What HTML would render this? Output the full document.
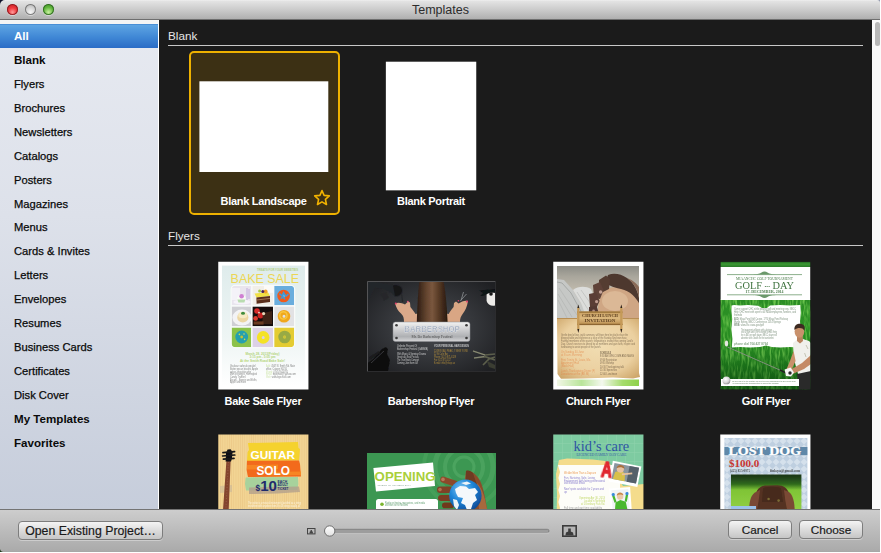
<!DOCTYPE html>
<html><head><meta charset="utf-8"><title>Templates</title>
<style>
*{box-sizing:border-box;margin:0;padding:0}
html,body{width:881px;height:553px;overflow:hidden;background:#fff;font-family:"Liberation Sans",sans-serif;}
#win{position:absolute;left:0;top:0;width:881px;height:553px;overflow:hidden;background:#fff}
#tb{position:absolute;left:0;top:0;width:880px;height:20px;background:linear-gradient(#efefef 0,#e2e2e2 1.5px,#cdcdcd 9px,#afafaf 19px);border-bottom:1px solid #6e6e6e;border-radius:5px 3px 0 0}
#tb .t{position:absolute;left:0;width:881px;top:2px;text-align:center;font-size:12.5px;color:#2c2c2c;line-height:16px}
.cornl{position:absolute;left:0;top:0;width:6px;height:6px;background:#0d1028}
.cornr{position:absolute;right:1px;top:0;width:3px;height:3px;background:#8d95aa}
.tl{position:absolute;top:4px;width:11px;height:11px;border-radius:50%}
#side{position:absolute;left:0;top:20px;width:158px;height:489px;background:linear-gradient(#e7eaf1 0%,#dde1ea 40%,#c6cddb 100%)}
#side .strip{position:absolute;left:0;top:0;width:158px;height:4px;background:#f4f4f4}
.row{position:absolute;left:0;width:158px;height:24px;line-height:23px;padding-left:14px;font-size:11.2px;color:#0a0a0a;-webkit-text-stroke:.25px #0a0a0a}
.row.b{font-weight:bold;font-size:11.6px;-webkit-text-stroke:0;line-height:22px}
.row.sel{background:linear-gradient(#5fa5e3 0%,#4189d6 50%,#2a6cc6 100%);color:#fff;border-top:1px solid #4a8fd6;line-height:21px}
#main{position:absolute;left:159px;top:20px;width:713px;height:489px;background:#1b1b1b;overflow:hidden}
.sh{position:absolute;left:9px;font-size:11.7px;color:#e6e6e6;line-height:14px}
.hl{position:absolute;left:9px;width:695px;height:1px;background:#c8c8c8}
.lab{position:absolute;letter-spacing:-.3px;font-size:11px;font-weight:bold;color:#fff;text-align:center;line-height:14px;white-space:nowrap}
#sb{position:absolute;left:872px;top:20px;width:9px;height:489px;background:#fafafa}
#sb i{position:absolute;left:3px;top:2px;width:5px;height:24px;border-radius:3px;background:#b9b9b9}
#bot{position:absolute;left:0;top:509px;width:880px;height:43px;background:linear-gradient(#cdcdcd 0,#bbbbbb 21px,#aaaaaa 41.2px,#a6a6a6 41.6px,#fff 42px);border-top:1px solid #747474}
.btn{position:absolute;top:10px;height:19px;border:1px solid #7d7d7d;border-radius:4px;background:linear-gradient(#f4f4f4 0%,#dcdcdc 50%,#c6c6c6 100%);font-size:11.8px;color:#1a1a1a;text-align:center;line-height:18px;-webkit-text-stroke:.2px #1a1a1a;box-shadow:0 1px 0 rgba(255,255,255,.35)}
</style></head><body>
<div id="win">
<div class="cornl"></div><div class="cornr"></div>
<div id="tb"><div class="t">Templates</div>
<div class="tl" style="left:7px;background:radial-gradient(circle at 50% 75%,#ff9a9a 0%,#f0383c 45%,#b81a20 100%);box-shadow:inset 0 0 0 1px rgba(120,20,25,.75),0 1px 0 rgba(255,255,255,.4)"></div>
<div class="tl" style="left:25px;background:radial-gradient(circle at 50% 75%,#f6f6f6 0%,#cfcfcf 55%,#a2a2a2 100%);box-shadow:inset 0 0 0 1px rgba(100,100,100,.8),0 1px 0 rgba(255,255,255,.4)"></div>
<div class="tl" style="left:42.5px;background:radial-gradient(circle at 50% 75%,#c9f0a0 0%,#63b83e 50%,#3c8a22 100%);box-shadow:inset 0 0 0 1px rgba(40,95,30,.8),0 1px 0 rgba(255,255,255,.4)"></div>
</div>
<div id="side"><div class="strip"></div>
<div class="row b sel" style="top:4px">All</div>
<div class="row b" style="top:29px">Blank</div>
<div class="row" style="top:53px">Flyers</div>
<div class="row" style="top:77px">Brochures</div>
<div class="row" style="top:101px">Newsletters</div>
<div class="row" style="top:125px">Catalogs</div>
<div class="row" style="top:149px">Posters</div>
<div class="row" style="top:173px">Magazines</div>
<div class="row" style="top:196px">Menus</div>
<div class="row" style="top:220px">Cards &amp; Invites</div>
<div class="row" style="top:244px">Letters</div>
<div class="row" style="top:268px">Envelopes</div>
<div class="row" style="top:292px">Resumes</div>
<div class="row" style="top:316px">Business Cards</div>
<div class="row" style="top:340px">Certificates</div>
<div class="row" style="top:364px">Disk Cover</div>
<div class="row b" style="top:388px">My Templates</div>
<div class="row b" style="top:412px">Favorites</div>
</div>
<div id="main">
<div class="sh" style="top:9px">Blank</div><div class="hl" style="top:25px"></div>
<div style="position:absolute;left:30px;top:31px;width:151px;height:164px;border:2px solid #eeb100;border-radius:5px;background:#3c3014"></div>
<svg style="position:absolute;left:40px;top:61px" width="130" height="92"><rect x=".4" y=".3" width="128.9" height="90.7" fill="#fff"/></svg>
<div class="lab" style="left:52px;top:174px;width:105px">Blank Landscape</div>
<svg style="position:absolute;left:154px;top:169px" width="18" height="17" viewBox="0 0 18 17"><path d="M9 1.6 L11.1 6.4 L16.3 6.9 L12.4 10.4 L13.5 15.5 L9 12.9 L4.5 15.5 L5.6 10.4 L1.7 6.9 L6.9 6.4 Z" fill="none" stroke="#f2b300" stroke-width="1.6" stroke-linejoin="round"/></svg>
<svg style="position:absolute;left:226px;top:41px" width="93" height="131"><rect x=".85" y=".7" width="90.4" height="128.65" fill="#fff"/></svg>
<div class="lab" style="left:222px;top:174px;width:100px">Blank Portrait</div>
<div class="sh" style="top:209px">Flyers</div><div class="hl" style="top:225px"></div>
<svg style="position:absolute;left:59px;top:241px" width="91" height="129" viewBox="0 0 91 129">
<defs>
<linearGradient id="bkbg" x1="0" y1="0" x2="0" y2="1"><stop offset="0" stop-color="#dfecec"/><stop offset=".6" stop-color="#eef5f4"/><stop offset="1" stop-color="#ffffff"/></linearGradient>
<filter id="bl5" x="-10%" y="-10%" width="120%" height="120%"><feGaussianBlur stdDeviation=".55"/></filter>
<filter id="bl3" x="-10%" y="-10%" width="120%" height="120%"><feGaussianBlur stdDeviation=".35"/></filter>
<clipPath id="bkclip"><rect x="13.6" y="24.8" width="62.6" height="61.4" rx="4"/></clipPath>
</defs>
<rect width="91" height="129" fill="#fff"/>
<rect x="4" y="4.6" width="83" height="120.4" fill="url(#bkbg)"/>
<text x="59.5" y="9.6" font-family="Liberation Sans,sans-serif" font-size="3.3" font-weight="bold" fill="#b4cf80" text-anchor="middle" textLength="41" lengthAdjust="spacingAndGlyphs">TREATS FOR YOUR SWEETIES</text>
<text x="12.6" y="22.2" font-family="Liberation Sans,sans-serif" font-size="13.6" fill="#ecd654" textLength="68.4" lengthAdjust="spacingAndGlyphs">BAKE SALE</text>
<rect x="12.6" y="23.8" width="64.6" height="63.4" rx="4.6" fill="#fafcfb" filter="url(#bl3)"/>
<g clip-path="url(#bkclip)"><g filter="url(#bl5)">
<rect x="12" y="23" width="66" height="65" fill="#f6f8f7"/>
<!-- row1 -->
<rect x="13.6" y="24.8" width="19.6" height="19.4" fill="#e9e5ee"/>
<rect x="14" y="27" width="8" height="12" fill="#f4f2f8"/><path d="M29 27V40M31 28V38" stroke="#b9a0d8" stroke-width=".8"/>
<ellipse cx="24" cy="41" rx="8.6" ry="2.6" fill="#f6f3fa"/><ellipse cx="23.4" cy="37.6" rx="4.4" ry="3.6" fill="#f8fbf6"/><path d="M19.4 38.6 H27.4 L26.4 41.6 H20.4 Z" fill="#b9dcb0"/><circle cx="23.6" cy="35.2" r="2.3" fill="#cf7fd2"/>
<rect x="34.4" y="24.8" width="20.6" height="19.4" fill="#f1eee8"/>
<rect x="46" y="24.8" width="9" height="7" fill="#fbfaf8"/>
<path d="M36.6 32.4 L50 31.2 L52 35 L38.4 36.6 Z" fill="#f1e044"/><path d="M38.4 36.6 L52 35 L52 41 L38.6 42.8 Z" fill="#5a2e1c"/><path d="M38.5 39 L52 37.4" stroke="#a87a56" stroke-width=".9"/>
<circle cx="47.6" cy="30.6" r="2" fill="#f0a22c"/><circle cx="44.8" cy="30.6" r="1.5" fill="#4a2452"/><circle cx="41.6" cy="30" r="1.5" fill="#a6c844"/>
<rect x="56.2" y="24.8" width="20" height="19.4" fill="#69addd"/>
<circle cx="65.6" cy="35" r="4" fill="none" stroke="#ef5a1c" stroke-width="4.6"/><path d="M61.4 32.6 l2.6 2.4 l1.6-3.4 l2.4 3.6 l2.4-2.2 M62.6 37.4 l2.4-1.2 l2 2" stroke="#3a9ad9" stroke-width="1.5" fill="none"/>
<!-- row2 -->
<rect x="13.6" y="45.4" width="19.6" height="19.9" fill="#cfcfd4"/>
<ellipse cx="24" cy="56.6" rx="9.6" ry="8" fill="#f3f3f5"/><ellipse cx="24.8" cy="56.4" rx="5.6" ry="5" fill="#ecd6a2"/><ellipse cx="24.8" cy="54" rx="4.6" ry="3.2" fill="#f6eac4"/><ellipse cx="25" cy="52.2" rx="2" ry="1.5" fill="#3f8c3c"/>
<rect x="34.4" y="45.4" width="20.6" height="19.9" fill="#150a08"/>
<circle cx="39" cy="50" r="2.8" fill="#d62a2a"/><circle cx="42.6" cy="54.6" r="3" fill="#c82222"/><circle cx="37.6" cy="57.4" r="2.4" fill="#dc3a30"/><path d="M45 52 L54 50 L54 63 L44 63 Z" fill="#3c2016"/><circle cx="45.6" cy="52.6" r="1.6" fill="#e6d6b8"/><circle cx="41" cy="51.6" r=".9" fill="#f0e0d0"/><rect x="35.6" y="60.4" width="10" height="3.2" fill="#6a3a24"/>
<rect x="56.2" y="45.4" width="20" height="19.9" fill="#e2e2e4"/>
<circle cx="66" cy="55.2" r="3.9" fill="none" stroke="#f0a71e" stroke-width="4.8"/><circle cx="65.4" cy="54.4" r="3.6" fill="none" stroke="#f8c63c" stroke-width="1.6"/>
<!-- row3 -->
<rect x="13.6" y="66.5" width="19.6" height="19.7" fill="#8cc24a"/>
<circle cx="23.7" cy="76" r="3.9" fill="none" stroke="#27a0ae" stroke-width="5"/><circle cx="21.4" cy="73.4" r=".8" fill="#c8e04a"/><circle cx="26.6" cy="78.4" r=".8" fill="#c8e04a"/><circle cx="26" cy="73" r=".7" fill="#e8e060"/><circle cx="23.7" cy="76" r="1.2" fill="#c8c038"/>
<rect x="34.4" y="66.5" width="20.6" height="19.7" fill="#dcd1e6"/>
<circle cx="45.2" cy="76.4" r="3.9" fill="none" stroke="#f4e226" stroke-width="4.8"/>
<rect x="56.2" y="66.5" width="20" height="19.7" fill="#e4cc31"/>
<circle cx="66.6" cy="76" r="3.9" fill="none" stroke="#98aa44" stroke-width="4.8"/><circle cx="66.6" cy="76" r="1.4" fill="#c8c23a"/>
</g>
<path d="M33.8 24V87M55.6 24V87M13 44.8H77M13 65.9H77" stroke="#f8faf9" stroke-width="1.2" fill="none"/>
</g>
<g font-family="Liberation Sans,sans-serif" font-weight="bold" fill="#b3d578" text-anchor="middle">
<text x="44.5" y="93.6" font-size="3.5" textLength="34" lengthAdjust="spacingAndGlyphs">March 28, 2013(Friday)</text>
<text x="44.5" y="97.2" font-size="3.3" textLength="26" lengthAdjust="spacingAndGlyphs">3:15 pm - 5:00 pm</text>
<text x="44.5" y="101.2" font-size="3.7" textLength="45" lengthAdjust="spacingAndGlyphs">At the Smith Road Bake Sale!</text>
</g>
<g font-family="Liberation Sans,sans-serif" font-size="3.2" fill="#333" opacity=".62" filter="url(#bl3)">
<text x="12" y="106.3" textLength="26" lengthAdjust="spacingAndGlyphs">Voulour sahnuk peuks!</text>
<text x="12" y="109" textLength="28" lengthAdjust="spacingAndGlyphs">Butter pecan biscotti, Apple</text>
<text x="12" y="111.7" textLength="21" lengthAdjust="spacingAndGlyphs">cakes, chocolate chip</text>
<text x="12" y="114.4" textLength="27" lengthAdjust="spacingAndGlyphs">Mom's brownies, Hummigbird</text>
<text x="12" y="117.1" textLength="16" lengthAdjust="spacingAndGlyphs">Candy Truffles!</text>
<text x="12" y="119.8" textLength="27" lengthAdjust="spacingAndGlyphs">Biscotti... Brownie and Muffin,</text>
<text x="12" y="122.3" textLength="16" lengthAdjust="spacingAndGlyphs">Apple and more</text>
<text x="48" y="106.3" textLength="29" lengthAdjust="spacingAndGlyphs"><tspan fill="#b5d67c">Add:</tspan> 4567 N. Smith Rd. Main</text>
<text x="48" y="109" textLength="21" lengthAdjust="spacingAndGlyphs">office, Catown 90210</text>
<text x="48" y="111.7" textLength="22" lengthAdjust="spacingAndGlyphs"><tspan fill="#b5d67c">Phone:</tspan> (704) 764 8715</text>
<text x="48" y="114.4" textLength="30" lengthAdjust="spacingAndGlyphs"><tspan fill="#b5d67c">Email:</tspan> bgschool@yahoo.com</text>
<text x="48" y="117.1" textLength="25" lengthAdjust="spacingAndGlyphs"><tspan fill="#b5d67c">Web:</tspan> www.bgschool.com</text>
</g>
<path class="trim" d="M-1 -1H92V130H-1Z M.25 0.65H90.45V128.55H.25Z" fill-rule="evenodd" fill="#1b1b1b"/>
</svg>
<svg style="position:absolute;left:208px;top:261px" width="129" height="91" viewBox="0 0 129 91">
<defs>
<radialGradient id="bbbg" cx=".5" cy=".5" r=".65"><stop offset="0" stop-color="#4a4c51"/><stop offset=".5" stop-color="#35373b"/><stop offset="1" stop-color="#1f2023"/></radialGradient>
<linearGradient id="bbhair" x1="0" y1="0" x2="1" y2="0"><stop offset="0" stop-color="#2c1c12"/><stop offset=".3" stop-color="#62432e"/><stop offset=".5" stop-color="#7a573e"/><stop offset=".7" stop-color="#5a3c28"/><stop offset="1" stop-color="#26180e"/></linearGradient>
<linearGradient id="bbpl" x1="0" y1="0" x2="0" y2="1"><stop offset="0" stop-color="#f2f2f2"/><stop offset=".45" stop-color="#c9cacc"/><stop offset=".75" stop-color="#aeb0b3"/><stop offset="1" stop-color="#d6d6d8"/></linearGradient>
<filter id="bb6" x="-10%" y="-10%" width="120%" height="120%"><feGaussianBlur stdDeviation=".6"/></filter>
<filter id="bb3" x="-10%" y="-10%" width="120%" height="120%"><feGaussianBlur stdDeviation=".3"/></filter>
</defs>
<rect width="129" height="91" fill="url(#bbbg)"/>
<g filter="url(#bb6)">
<!-- shoulders -->
<path d="M37 41 C38 36 44 33.5 51 32.5 L79 32.5 C86 33.5 91 36 92.5 41 Z" fill="#d8aa8a"/>
<!-- hands -->
<path d="M28 22.6 C31 21 35 22 38 23.6 L41 20.6 L43 21.4 L43.4 26 C46 29 48.6 33 50.4 36 L51 41 L37 41 C37 37 36.4 35 34 32.6 C31 30 29.4 27 28 22.6 Z" fill="#dba98a"/>
<path d="M101 20 C98 19 94.6 20.4 91.6 22.6 L89 20.6 L87 22 L86.6 26 C84 29 82 32 80.6 35 L80 41 L93 41 C93 38 93.6 35.6 95.6 33 C98 30 100 26 101 20 Z" fill="#d9a684"/>
<circle cx="28.8" cy="22.6" r="1" fill="#e2416c"/><circle cx="100" cy="20.4" r="1" fill="#e2416c"/><circle cx="40.8" cy="20.6" r=".9" fill="#d8507a"/><circle cx="91.4" cy="19.8" r=".8" fill="#e2416c"/>
<!-- hair -->
<path d="M52.5 0 L76.5 0 C78.5 10 80 26 80.6 41 L49.8 41 C50.4 26 51 10 52.5 0 Z" fill="url(#bbhair)"/>
<!-- scissors / comb -->
<path d="M96.5 11 L94 19.5 M99.5 13 L93.4 19.8" stroke="#8e9296" stroke-width=".8" fill="none"/>
<path d="M34.6 13 L35.6 21" stroke="#26282c" stroke-width="1.3"/>
<!-- hair dryer top-left -->
<path d="M1 1 L8 1 L18 2.6 L26 4 C31 2.6 36 4.6 36 9 C36 13.6 32 16.6 27.6 15.6 L24.4 12 L17 8.6 L8 6.6 L5 12 L3 18 L1 18 Z" fill="#24262a"/>
<path d="M26 4.6 C31 3.6 35 6 35 9.6 C35 13 31 15.6 28 14.8 Z" fill="#141518"/>
<path d="M13 12.6 L19 11 L22 17 L17 20 Z" fill="#26282a"/>
<!-- top-right -->
<path d="M112 9.6 L128 8 L128 11.6 L121 12.6 L116 15 L113 15 L116 12 Z" fill="#111214"/>
<path d="M119.6 13.6 C121 12 124 11.6 128 12 L128 24.6 C124 25.4 120.6 23.6 119.6 20 Z" fill="#ecebe8"/>
<circle cx="124" cy="13" r="1.8" fill="#161618"/>
<!-- bottom-left straightener -->
<path d="M1 82 L6 78 L15 68 L19 66 L21 68 L20 73 L23 79 L21 90 L1 90 Z" fill="#0e0e10"/>
<path d="M4 82 L17 70" stroke="#3a3b3f" stroke-width=".9"/>
<path d="M2 76 L12 70 L13 72 L3 79 Z" fill="#1a1b1e"/>
<!-- bottom-right clippers -->
<path d="M106 70 L118 74 L128 73 M107 77 L118 75.6 L128 79 M116 84 L122 78 L128 76" stroke="#5c5e4c" stroke-width="1.7" fill="none"/>
<path d="M106 70 L118 74 M107 77 L117 75.6" stroke="#9c9e88" stroke-width=".7" fill="none"/>
<path d="M120 80 L128 84 L128 88 L122 86 Z" fill="#3a3c30"/>
</g>
<!-- plate -->
<g filter="url(#bb3)">
<rect x="26" y="41" width="77" height="19.5" rx="2.5" fill="url(#bbpl)" stroke="#8a8c90" stroke-width=".5"/>
<circle cx="29.5" cy="44.2" r="1.3" fill="#3a3a3a"/><circle cx="99.5" cy="44.2" r="1.3" fill="#3a3a3a"/><circle cx="29.5" cy="57" r="1.3" fill="#3a3a3a"/><circle cx="99.5" cy="57" r="1.3" fill="#3a3a3a"/>
<text x="65" y="50.9" font-family="Liberation Sans,sans-serif" font-weight="bold" font-size="8.2" fill="#9ca7ba" stroke="#eef1f5" stroke-width=".25" text-anchor="middle" textLength="55.5" lengthAdjust="spacingAndGlyphs">BARBERSHOP</text>
<text x="65" y="56.6" font-family="Liberation Serif,serif" font-size="3.4" fill="#4a4a4a" text-anchor="middle" textLength="41" lengthAdjust="spacingAndGlyphs">Mr. Do Barbershop Festival</text>
</g>
<g font-family="Liberation Sans,sans-serif" font-size="3.3" fill="#f0f0f0" opacity=".75" filter="url(#bb3)">
<text x="30" y="65.6" textLength="20" lengthAdjust="spacingAndGlyphs">Unlimite Present Of</text>
<text x="30" y="68.6" textLength="31" lengthAdjust="spacingAndGlyphs">Barbershop Festival (GAMMA)</text>
<text x="30" y="74" textLength="29" lengthAdjust="spacingAndGlyphs">With Music &amp; Seminar Drama</text>
<text x="30" y="76.9" textLength="22" lengthAdjust="spacingAndGlyphs">Great talk. Real Pro talk.</text>
<text x="30" y="79.8" textLength="22" lengthAdjust="spacingAndGlyphs">The True Beats Comport</text>
<text x="30" y="82.7" textLength="21" lengthAdjust="spacingAndGlyphs">Coming Join them all!</text>
<text x="67" y="65.8" textLength="35" lengthAdjust="spacingAndGlyphs" font-weight="bold">YOUR PERSONAL HAIR DESIGN</text>
<g fill="#d7a63a">
<text x="67" y="71" textLength="34" lengthAdjust="spacingAndGlyphs">1249 ROAD PEAK, 7 NEW YORK</text>
<text x="67" y="74" textLength="14" lengthAdjust="spacingAndGlyphs">22 St Cafe Bar</text>
<text x="67" y="77" textLength="22" lengthAdjust="spacingAndGlyphs">Phone: (021) 871-6128</text>
<text x="67" y="80" textLength="17" lengthAdjust="spacingAndGlyphs">Fax: (021) 871-6127</text>
<text x="67" y="83" textLength="21" lengthAdjust="spacingAndGlyphs">E-mail: info@shop.us</text>
</g></g>
<path d="M.5 90.5V.5H128.5" fill="none" stroke="#545456" stroke-width="1"/><path d="M128.5 .5V90.5H.5" fill="none" stroke="#2c2c2e" stroke-width="1"/>
</svg>
<svg style="position:absolute;left:394px;top:241px" width="91" height="129" viewBox="0 0 91 129">
<defs>
<linearGradient id="chbg" x1="0" y1="0" x2="0" y2="1"><stop offset="0" stop-color="#7f807c"/><stop offset=".25" stop-color="#a9a69c"/><stop offset=".6" stop-color="#cdc6b6"/><stop offset="1" stop-color="#b9ad98"/></linearGradient>
<radialGradient id="chpar" cx=".5" cy=".45" r=".75"><stop offset="0" stop-color="#f1ddb2"/><stop offset=".6" stop-color="#ebd0a0"/><stop offset="1" stop-color="#c79d5e"/></radialGradient>
<linearGradient id="chgr" x1="0" y1="0" x2="1" y2="0"><stop offset="0" stop-color="#f2f7e6"/><stop offset=".3" stop-color="#b9e59a"/><stop offset=".55" stop-color="#f4f8ee"/><stop offset=".8" stop-color="#a5dc6c"/><stop offset="1" stop-color="#8fd14a"/></linearGradient>
<linearGradient id="chsc" x1="0" y1="0" x2="0" y2="1"><stop offset="0" stop-color="#c9a062"/><stop offset=".5" stop-color="#dcb97e"/><stop offset="1" stop-color="#b98c4e"/></linearGradient>
<filter id="ch7" x="-10%" y="-10%" width="120%" height="120%"><feGaussianBlur stdDeviation=".7"/></filter>
<filter id="ch3" x="-10%" y="-10%" width="120%" height="120%"><feGaussianBlur stdDeviation=".3"/></filter>
<clipPath id="chph"><rect x="4" y="5" width="82" height="53"/></clipPath>
</defs>
<rect width="91" height="129" fill="#fff"/>
<g clip-path="url(#chph)"><g filter="url(#ch7)">
<rect x="0" y="0" width="91" height="62" fill="url(#chbg)"/>
<!-- book -->
<path d="M4 18 L11 19 L20 29 L28 42 L34 53 L34 58 L4 58 Z" fill="#c6c8c6"/>
<path d="M4 21 L9 22 L18 32 L30 54" stroke="#8f9290" stroke-width=".6" fill="none"/>
<path d="M20 29 C25 25 33 25 38 28 L44 44 L42 58 L34 58 L28 42 Z" fill="#dcdddb"/>
<path d="M6 27 L24 54 M5 33 L19 56 M5 39 L14 57 M24 31 L36 50 M28 29 L40 46" stroke="#a7a9a8" stroke-width=".45"/>
<!-- forearm / fist -->
<path d="M50 30 C56 25 68 25 76 30 C84 35 87 42 88 48 L88 58 L46 58 C44 48 45 38 50 30 Z" fill="#cfa684"/>
<ellipse cx="62" cy="40" rx="13" ry="10" fill="#dbb896"/>
<!-- dark back hand -->
<path d="M55 14 C61 11.6 68 13 74 17 C81 22 86 30 87 44 C83 36 77 30 68 28 C62 27 57 25 52 22 Z" fill="#4e382e"/>
<path d="M74 17 C81 22 86 30 87 44 L88 30 C86 24 80 19 74 17 Z" fill="#8a6a56"/>
<!-- fingers -->
<path d="M46 19 L53 14.6 L57 18 L56 28 L50 31 L46 27 Z" fill="#553c32"/>
<path d="M40 24 L47 21 L50.6 29 L47 38 L41 37 Z" fill="#5e4238"/>
<path d="M36 33 L43 31.6 L46.6 40 L43 48 L37 46 Z" fill="#5a3e34"/>
<path d="M36 46 L43.6 45 L46 53 L40 55.6 L36 52 Z" fill="#533830"/>
<circle cx="47.6" cy="31" r="1.7" fill="#c4a296"/><circle cx="43.6" cy="40.6" r="1.6" fill="#bf9c90"/><circle cx="40.6" cy="50" r="1.4" fill="#b08c80"/>
</g></g>
<!-- parchment -->
<g filter="url(#ch3)">
<path d="M4 57 L86 57 L86 112 L87 116 L80 117.5 L60 116.5 L30 117.5 L8 117.8 L4.5 113 Z" fill="url(#chpar)"/>
<rect x="4" y="57" width="82" height="1" fill="#b88f55"/>
<rect x="4" y="118.5" width="82" height="6.5" fill="url(#chgr)"/>
</g>
<!-- scroll -->
<g filter="url(#ch3)">
<rect x="24" y="50.5" width="45.5" height="13.5" fill="url(#chsc)"/>
<rect x="24" y="50.5" width="45.5" height="1.3" fill="#9a7238"/><rect x="24" y="62.8" width="45.5" height="1.3" fill="#8e6630"/>
<rect x="24.2" y="47" width="2.2" height="21" fill="#c59a58"/><rect x="67.2" y="47" width="2.2" height="21" fill="#c59a58"/>
<path d="M24.3 47 L25.3 43.5 L26.3 47 Z M67.3 47 L68.3 43.5 L69.3 47 Z M24.3 68 L25.3 72 L26.3 68 Z M67.3 68 L68.3 72 L69.3 68 Z" fill="#2c2018"/>
<g font-family="Liberation Serif,serif" font-weight="bold" font-size="3.6" fill="#5a3c1e" text-anchor="middle">
<text x="47" y="56.2" textLength="36" lengthAdjust="spacingAndGlyphs">CHURCH LUNCH</text>
<text x="47" y="60.8" textLength="31" lengthAdjust="spacingAndGlyphs">INVITATION</text>
</g></g>
<g font-family="Liberation Sans,sans-serif" font-size="3.3" fill="#4a3826" opacity=".62" filter="url(#ch3)">
<text x="8" y="75" textLength="67" lengthAdjust="spacingAndGlyphs">Gentle deed of love, joyful summons, will those here be glad to share the</text>
<text x="8" y="77.9" textLength="66" lengthAdjust="spacingAndGlyphs">blessed table and experience a slice of the Sunday luncheon hour.</text>
<text x="8" y="80.8" textLength="72" lengthAdjust="spacingAndGlyphs">Faithful members of the parish: fellowship is invited this coming Lord's</text>
<text x="8" y="83.7" textLength="74" lengthAdjust="spacingAndGlyphs">Day. Church services to attend by all members and gain faith, inspire and</text>
<text x="8" y="86.6" textLength="40" lengthAdjust="spacingAndGlyphs">fundraising to assist people of the parish.</text>
<g fill="#e07a3a">
<text x="8" y="92.3" textLength="23" lengthAdjust="spacingAndGlyphs">On Sunday 30 June</text>
<text x="8" y="95.3" textLength="21" lengthAdjust="spacingAndGlyphs">at 8 a.m. Evening</text>
<text x="8" y="100" textLength="30" lengthAdjust="spacingAndGlyphs">First Trinity St. Louis, Mo.</text>
<text x="8" y="103" textLength="18" lengthAdjust="spacingAndGlyphs">Apartment Hall</text>
<text x="8" y="106" textLength="13" lengthAdjust="spacingAndGlyphs">(Back Hall)</text>
<text x="8" y="111" textLength="34" lengthAdjust="spacingAndGlyphs">Lunch, Thanksgiving Dinner (F)</text>
<text x="8" y="114" textLength="28" lengthAdjust="spacingAndGlyphs">Donations at the (BK M)</text>
</g>
<g fill="#3a2a1c">
<text x="47" y="92.6" textLength="11" lengthAdjust="spacingAndGlyphs" font-weight="bold">SCHEDULE</text>
<text x="47" y="96.2" textLength="34" lengthAdjust="spacingAndGlyphs">8:30 AM WELCOME AND MASS</text>
<text x="47" y="99.6" textLength="17" lengthAdjust="spacingAndGlyphs">09:00 Registration</text>
<text x="47" y="103.1" textLength="14" lengthAdjust="spacingAndGlyphs">09:30 Worship</text>
<text x="47" y="106.6" textLength="24" lengthAdjust="spacingAndGlyphs">10:30 Thanksgiving talk</text>
<text x="47" y="110.1" textLength="17" lengthAdjust="spacingAndGlyphs">11:30 Speeches</text>
<text x="47" y="113.6" textLength="17" lengthAdjust="spacingAndGlyphs">12:00 Luncheon</text>
</g></g>
<path class="trim" d="M-1 -1H92V130H-1Z M.25 0.65H90.45V128.55H.25Z" fill-rule="evenodd" fill="#1b1b1b"/>
</svg>
<svg style="position:absolute;left:561px;top:241px" width="91" height="129" viewBox="0 0 91 129">
<defs>
<linearGradient id="gfgr" x1="0" y1="0" x2="0" y2="1"><stop offset="0" stop-color="#2a8c24"/><stop offset=".3" stop-color="#2e9626"/><stop offset=".7" stop-color="#238420"/><stop offset="1" stop-color="#1a6e1a"/></linearGradient>
<linearGradient id="gftop" x1="0" y1="0" x2="0" y2="1"><stop offset="0" stop-color="#1c5a1e"/><stop offset=".5" stop-color="#3c9a34"/><stop offset="1" stop-color="#2a7a28"/></linearGradient>
<radialGradient id="gfball" cx=".4" cy=".35" r=".7"><stop offset="0" stop-color="#ffffff"/><stop offset=".6" stop-color="#d8d8d8"/><stop offset="1" stop-color="#8a8a8a"/></radialGradient>
<filter id="gf6" x="-10%" y="-10%" width="120%" height="120%"><feGaussianBlur stdDeviation=".6"/></filter>
<filter id="gf3" x="-10%" y="-10%" width="120%" height="120%"><feGaussianBlur stdDeviation=".3"/></filter>
<filter id="gfgrass" x="0" y="0" width="100%" height="100%"><feTurbulence type="fractalNoise" baseFrequency=".5 .09" numOctaves="2" seed="7" result="n"/><feColorMatrix in="n" type="matrix" values="0 0 0 0 0  0 0 0 0 0  0 0 0 0 0  3.2 0 0 0 -1.35" result="a"/><feComposite in="SourceGraphic" in2="a" operator="in"/><feGaussianBlur stdDeviation=".35"/></filter>
<linearGradient id="gfshade" x1="0" y1="0" x2="0" y2="1"><stop offset="0" stop-color="#0a4a0c" stop-opacity="0"/><stop offset=".55" stop-color="#0a4a0c" stop-opacity=".1"/><stop offset="1" stop-color="#063a08" stop-opacity=".55"/></linearGradient>
<clipPath id="gfc"><rect x=".5" y=".5" width="90" height="128"/></clipPath>
</defs>
<rect width="91" height="129" fill="#1a1a1a"/>
<g clip-path="url(#gfc)">
<rect x="0" y="38" width="91" height="91" fill="url(#gfgr)"/>
<rect x="0" y="38" width="91" height="91" fill="#7fd65a" filter="url(#gfgrass)" opacity=".75"/>
<rect x="0" y="38" width="91" height="91" fill="url(#gfshade)"/>
<rect x="0" y="0" width="91" height="6" fill="url(#gftop)"/>
<rect x="0" y="6" width="91" height="33" fill="#fff"/>
<g filter="url(#gf3)">
<path d="M7 13.6H82M7 33.8H82" stroke="#6d9a6d" stroke-width=".8"/>
<path d="M33 13.4 C38 13 40 12.4 41.6 11.4 C43 10.2 46 10.2 47.4 11.4 C49 12.4 51 13 56 13.4 Z M33 34 C38 34.4 40 35 41.6 36 C43 37.2 46 37.2 47.4 36 C49 35 51 34.4 56 34 Z" fill="#6a986a"/>
<g font-family="Liberation Serif,serif" fill="#4c7d4c" text-anchor="middle">
<text x="44.5" y="18.7" font-size="3.9" textLength="57" lengthAdjust="spacingAndGlyphs">MIAANCHC GOLF TOURNAMENT</text>
<text x="44.5" y="28.2" font-size="10.2" textLength="59" lengthAdjust="spacingAndGlyphs" fill="#3f733f">GOLF <tspan font-size="5" dy="-1.6">•••</tspan><tspan dy="1.6"> DAY</tspan></text>
<text x="44.5" y="32.1" font-size="3.6" font-weight="bold" textLength="38" lengthAdjust="spacingAndGlyphs">17. DECEMBER, 2014</text>
</g></g>
<!-- text box -->
<g filter="url(#gf3)">
<path d="M11.6 44.6 L14 44 L20 44.6 L28 44 L38 44.8 L42 47 L47 47 L50 44.6 L60 44 L70 44.6 L80.3 44 L80.8 52 L80 60 L80.6 70 L80 80 L80.4 86.4 L70 86 L60 86.6 L52 86 L46 84.6 L40 86 L30 86.6 L20 86 L11.8 86.6 L12.4 78 L11.4 68 L12.2 58 L11.4 50 Z" fill="#fff"/>
<g font-family="Liberation Sans,sans-serif" font-size="3.2" fill="#2c4c2c" opacity=".62">
<text x="14" y="49.3" textLength="62" lengthAdjust="spacingAndGlyphs">Come support CHC while playing golf and meeting new. NBCC</text>
<text x="14" y="52.2" textLength="62" lengthAdjust="spacingAndGlyphs">Help CHC meet with open to all NDA employees, families, and</text>
<text x="14" y="55.1" textLength="8" lengthAdjust="spacingAndGlyphs">friends</text>
<text x="14" y="59.4" textLength="54" lengthAdjust="spacingAndGlyphs"><tspan font-weight="bold">ADD:</tspan>   Maya Pond Golf Course, 1770 Maya Pond Parkway</text>
<text x="14" y="62.3" textLength="47" lengthAdjust="spacingAndGlyphs">Myrtle Spring, NBCC Conference 2014 Springs</text>
<text x="14" y="65.2" textLength="30" lengthAdjust="spacingAndGlyphs"><tspan font-weight="bold">WEB:</tspan>   www.chc.nasa.gov/golf</text>
<text x="21" y="69.8" textLength="31" lengthAdjust="spacingAndGlyphs">The tournament will begin with a shotgun</text>
<text x="21" y="72.4" textLength="36" lengthAdjust="spacingAndGlyphs">start at 8am and is the scramble format. Entry</text>
<text x="21" y="75" textLength="36" lengthAdjust="spacingAndGlyphs">fee is $65 per golf player. NBCC player will</text>
<text x="21" y="77.6" textLength="33" lengthAdjust="spacingAndGlyphs">advertise with a booth for the tournament.</text>
<text x="14" y="84" font-size="4.4" font-weight="bold" fill="#356a35" opacity="1" textLength="34" lengthAdjust="spacingAndGlyphs">phone dial 704 427 8764</text>
</g></g>
<!-- club -->
<g filter="url(#gf3)">
<path d="M7.5 86 L62 110" stroke="#8a8f86" stroke-width=".9"/>
<path d="M60 109 L66 112" stroke="#222" stroke-width="1.4"/>
<ellipse cx="6.5" cy="82.5" rx="1.7" ry="3" fill="#e6e6e0"/>
</g>
<!-- golfer -->
<g filter="url(#gf6)">
<path d="M73 82 L77 78.6 L83 78 L89 80 L91 82 L91 116 L79 116 L76 106 L73.6 96 Z" fill="#f0f0ec"/>
<path d="M77 113 L91 110 L91 129 L79 129 Z" fill="#2a2a2c"/>
<path d="M73.6 90 L70 100 L66.6 108 L70.6 110.6 L75.6 100 Z" fill="#c9906a"/>
<path d="M91 94 L82 102 L71 108.6 L72.6 113 L84 108 L91 103 Z" fill="#c48a66"/>
<path d="M64.6 108.6 L70.6 106.6 L74 111.6 L71 115.6 L66 115 Z" fill="#f6f6f6"/>
<circle cx="70" cy="112" r="1.7" fill="#2a2a2a"/>
<path d="M77 75 L82.6 75 L83 80 L80 82.6 L77 80 Z" fill="#b9835f"/>
<ellipse cx="79.4" cy="70.6" rx="4.8" ry="6.2" fill="#c9916c"/>
<path d="M74.4 69 C74 63.6 78 62.4 81.6 63 C85 63.8 85 67 84.4 69.6 C82.6 66.4 77.6 66.4 74.4 69 Z" fill="#3c2a20"/>
<path d="M86 84 L88 88 M84.6 92 L86 96" stroke="#b9b9a6" stroke-width=".8"/>
</g>
<!-- bottom band -->
<g filter="url(#gf3)">
<rect x="1" y="118" width="78" height="7" fill="#fff"/>
<circle cx="6.4" cy="119.4" r="3.9" fill="url(#gfball)"/>
<g font-family="Liberation Sans,sans-serif" font-size="1.9" fill="#5a7a5a">
<text x="12" y="120.8" textLength="64" lengthAdjust="spacingAndGlyphs">The CHC has set up the Charitable Golf Fund to provide scholarships for the Boys &amp; Girls Clubs.</text>
<text x="12" y="123.2" textLength="47" lengthAdjust="spacingAndGlyphs">All proceeds from the tournament go to support the program.</text>
</g></g>
</g>
<path class="trim" d="M-1 -1H92V130H-1Z M.25 0.65H90.45V128.55H.25Z" fill-rule="evenodd" fill="#1b1b1b"/>
</svg>
<svg style="position:absolute;left:59px;top:414px" width="91" height="129" viewBox="0 0 91 129">
<defs>
<pattern id="gtp" width="2.2" height="4" patternUnits="userSpaceOnUse"><rect width="2.2" height="4" fill="#f2d493"/><rect width=".7" height="4" fill="#ecc988"/></pattern>
<filter id="gt6" x="-10%" y="-10%" width="120%" height="120%"><feGaussianBlur stdDeviation=".6"/></filter>
<filter id="gt3" x="-10%" y="-10%" width="120%" height="120%"><feGaussianBlur stdDeviation=".3"/></filter>
</defs>
<rect width="91" height="129" fill="url(#gtp)"/>
<g filter="url(#gt6)">
<path d="M30 9 L80 8 L80.5 14 L82 15 L81 26.6 L29 27 L29.6 18 L31 16 Z" fill="#f5d22e"/>
<path d="M29 26.8 L81 26.4 L82 30 L83 42.6 L30 43 L28.6 36 Z" fill="#f26a1c"/>
<path d="M29 31 L60 30.4 L60 35 L29 35.6 Z M50 38 L83 37.6 L83 41 L50 41.6 Z" fill="#f78c22" opacity=".8"/>
<path d="M27.6 43.4 L80 43 L80.4 50 L79 56 L28 56.6 L27 50 Z" fill="#a7d29c"/>
<path d="M31 53.4 L81 52.6 L82 58 L60 59.6 L31 60 Z" fill="#b3a08c" opacity=".8"/>
<path d="M2 52 L14 51 L14 58 L2 59 Z" fill="#c9b79a" opacity=".6"/>
</g>
<g filter="url(#gt3)">
<!-- guitar -->
<path d="M8.4 27 L12.6 27 L10.7 76 L8 96 L2 96 L5 76 Z" fill="#84442f"/>
<path d="M10.4 28 L7.6 80" stroke="#c49478" stroke-width=".5" stroke-dasharray=".6 2.2"/>
<path d="M7.6 27.6 L8 19 L9.6 15.6 L12.6 15.2 L14.6 18 L14 24 L13 27.6 Z" fill="#111113"/>
<path d="M5 18.6 L16.6 17.6 M4.6 22 L16.8 21 M5.4 25.2 L16 24.4" stroke="#151517" stroke-width="1.7" stroke-linecap="round"/>
</g>
<g font-family="Liberation Sans,sans-serif" font-weight="bold" text-anchor="middle">
<text x="54.8" y="25.3" font-size="11.8" fill="#fff" textLength="44.5" lengthAdjust="spacingAndGlyphs">GUITAR</text>
<text x="55.2" y="41" font-size="12.2" fill="#fff" textLength="33.6" lengthAdjust="spacingAndGlyphs">SOLO</text>
<text x="48.3" y="56.9" font-size="15.4" fill="#1f2b6c" textLength="21.4" lengthAdjust="spacingAndGlyphs"><tspan font-size="8.5">$</tspan>10</text>
<g font-size="2.7" fill="#1f2b6c" text-anchor="start">
<text x="59.6" y="48.6" textLength="9.6" lengthAdjust="spacingAndGlyphs">EACH</text>
<text x="59.6" y="52.4" textLength="10.4" lengthAdjust="spacingAndGlyphs">ADULT</text>
<text x="59.6" y="56.2" textLength="10.8" lengthAdjust="spacingAndGlyphs">TICKET</text>
</g></g>
<g font-family="Liberation Sans,sans-serif" font-size="3" fill="#fffaf0" opacity=".8" filter="url(#gt3)">
<text x="30" y="70" textLength="53" lengthAdjust="spacingAndGlyphs">The guitar is a musical instrument classified as a string</text>
<text x="30" y="72.8" textLength="52" lengthAdjust="spacingAndGlyphs">instrument with anywhere from 4 to 18 strings usually, all</text>
</g>
<path class="trim" d="M-1 -1H92V130H-1Z M.25 0.5H90.45V128.4H.25Z" fill-rule="evenodd" fill="#1b1b1b"/>
</svg>
<svg style="position:absolute;left:208px;top:433px" width="129" height="91" viewBox="0 0 129 91">
<defs>
<radialGradient id="opglobe" cx=".38" cy=".3" r=".8"><stop offset="0" stop-color="#7cc4f4"/><stop offset=".45" stop-color="#1f86d8"/><stop offset="1" stop-color="#0b3f8a"/></radialGradient>
<filter id="op6" x="-10%" y="-10%" width="120%" height="120%"><feGaussianBlur stdDeviation=".6"/></filter>
<filter id="op3" x="-10%" y="-10%" width="120%" height="120%"><feGaussianBlur stdDeviation=".3"/></filter>
</defs>
<rect width="129" height="91" fill="#3c9752"/>
<g fill="none" stroke="#57ab68" filter="url(#op6)">
<circle cx="97" cy="14" r="10" stroke-width="3" opacity=".6"/>
<circle cx="97" cy="14" r="19" stroke-width="4" opacity=".55"/>
<circle cx="97" cy="14" r="29" stroke-width="5" opacity=".5"/>
<circle cx="97" cy="14" r="40" stroke-width="4" opacity=".35"/>
</g>
<g filter="url(#op3)">
<path d="M6.4 15 L66 9.4 L68 33 L9 38.6 Z" fill="#fff"/>
<rect x="9" y="46" width="62" height="30" rx="2.5" fill="#fff"/>
<circle cx="15" cy="51.2" r="1.8" fill="#7ab52e"/>
<g font-family="Liberation Sans,sans-serif" font-size="3" fill="#3f8a52" opacity=".8">
<text x="18" y="50.7" textLength="40" lengthAdjust="spacingAndGlyphs">Radio orchestra, magazines, and media</text>
<text x="18" y="53.4" textLength="23" lengthAdjust="spacingAndGlyphs">attention to the Mellons</text>
</g>
<text x="10.6" y="33" font-family="Liberation Serif,serif" font-size="2.9" fill="#7d9a86" textLength="33" lengthAdjust="spacingAndGlyphs">Monday 05 November 2013</text>
</g>
<text x="7.6" y="27.6" font-family="Liberation Sans,sans-serif" font-weight="bold" font-size="13.2" fill="#a9cf3a" textLength="61" lengthAdjust="spacingAndGlyphs">OPENING</text>
<g filter="url(#op6)">
<!-- hand -->
<path d="M99 18 C103 17 108 20 112 26 C116 32 118 44 120 56 L100 56 L96 40 Z" fill="#8a4e2c"/>
<path d="M99 18 C101 17 104 18 106 20 L110 32 L104 36 L99 26 Z" fill="#6e3a20"/>
<path d="M110 30 C116 36 118 46 120 56 L112 56 Z" fill="#a8683e"/>
<rect x="73" y="25.5" width="18" height="6" rx="3" fill="#8c4a2a" transform="rotate(18 82 28)"/>
<rect x="70" y="33.5" width="16" height="6.4" rx="3.2" fill="#7e4226"/>
<rect x="71" y="42" width="15" height="6" rx="3" fill="#7a3e22"/>
<rect x="75" y="49.6" width="12" height="5.6" rx="2.8" fill="#70381e"/>
<circle cx="76" cy="26.4" r="1.8" fill="#b8785a"/><circle cx="73" cy="36.6" r="1.8" fill="#b0704e"/>
</g>
<g filter="url(#op3)">
<circle cx="98.4" cy="42.6" r="16.2" fill="url(#opglobe)"/>
<path d="M88 36 L93 33 L99 33.6 L102 36 L108 35 L111 39 L108 42 L110 47 L106 50 L104 56 L100 57 L98 52 L94 50 L96 45 L91 44 L89 40 Z" fill="#f4f8fb"/>
<path d="M86 46 L90 47 L92 52 L90 57 L87 53 Z" fill="#eef4f8"/>
<path d="M94 30 L100 28.6 L104 30.4 L99 32 Z" fill="#eef4f8"/>
</g>
</svg>
<svg style="position:absolute;left:394px;top:414px" width="91" height="129" viewBox="0 0 91 129">
<defs>
<pattern id="kdp" width="9" height="9" patternUnits="userSpaceOnUse"><rect width="9" height="9" fill="#7ecba1"/><path d="M0 .4H9M.4 0V9" stroke="#8cd2ab" stroke-width=".7"/></pattern>
<filter id="kd6" x="-10%" y="-10%" width="120%" height="120%"><feGaussianBlur stdDeviation=".6"/></filter>
<filter id="kd3" x="-10%" y="-10%" width="120%" height="120%"><feGaussianBlur stdDeviation=".3"/></filter>
</defs>
<rect width="91" height="129" fill="url(#kdp)"/>
<g filter="url(#kd3)">
<path d="M6 26 L14 24.6 L40 25.4 L52 27 L56 30 L91 34 L91 129 L3 129 L4 60 L3 40 Z" fill="#f4dc8c"/>
<path d="M56 28 L91 32 L91 50 L70 52 Z" fill="#7ecba1"/>
<path d="M5 31 L66 31 L67 50 L68 129 L6 129 L7 110 L5.4 104 L7 98 L5.4 92 L7 86 L5.4 80 L7 74 L5.4 68 L7 62 L5.4 56 L7 50 L5.4 44 L7 38 Z" fill="#fdfdf8"/>
</g>
<text x="48.4" y="17" font-family="Liberation Serif,serif" font-size="15" fill="#2f55a4" text-anchor="middle" textLength="55.6" lengthAdjust="spacingAndGlyphs">kid’s care</text>
<text x="48.4" y="22" font-family="Liberation Serif,serif" font-size="3.5" fill="#3a5aa8" text-anchor="middle" textLength="50" lengthAdjust="spacingAndGlyphs">LICENCED FAMILY DAYCARE</text>
<g filter="url(#kd3)">
<!-- polaroid 1 -->
<g transform="rotate(11 72 40)">
<rect x="57.6" y="29.4" width="29" height="21" fill="#fff"/>
<rect x="59.6" y="31.2" width="25" height="16" fill="#8a96a0"/>
<rect x="75" y="31.2" width="9.6" height="16" fill="#55606a"/>
<path d="M61 47.2 L62 40 L68 37 L72 40 L73 47.2 Z" fill="#d8c04a"/>
<circle cx="66.5" cy="36" r="3.6" fill="#e8c2a0"/>
<path d="M62.6 36 C62.6 31 70 30.8 70.6 35 C68 33.6 65 34 62.6 36 Z" fill="#a8703c"/>
<path d="M69 41 L79 38" stroke="#e8c2a0" stroke-width="1.6"/>
</g>
<!-- polaroid 2 -->
<g transform="rotate(-4 68 66)">
<rect x="57" y="53.6" width="21" height="26" fill="#fff"/>
<rect x="59" y="55.6" width="17" height="22" fill="#f1f4f6"/>
<circle cx="67.4" cy="62.4" r="3.2" fill="#eccaa8"/>
<path d="M64 61.4 C64.4 57.6 70.4 57.6 70.8 61.4 C68.6 60 66 60 64 61.4 Z" fill="#c88a4a"/>
<path d="M61 77.6 L62.4 68 L67.4 66 L72.6 68 L74 77.6 Z" fill="#4ab82e"/>
<path d="M62.4 68 L60.6 61 M72.6 68 L74.4 61" stroke="#4ab82e" stroke-width="2.2"/>
<circle cx="60.6" cy="60" r="1.6" fill="#3a8ad8"/><circle cx="74.4" cy="60" r="1.6" fill="#3a8ad8"/>
</g>
</g>
<text x="0" y="0" font-family="Liberation Sans,sans-serif" font-weight="bold" font-size="21.5" fill="#e0262e" text-anchor="middle" transform="translate(53.2 43) rotate(5) scale(.7 1)" stroke="#e0262e" stroke-width="1.5" stroke-linejoin="round" filter="url(#kd3)">A</text>
<g font-family="Liberation Sans,sans-serif" font-size="3.2" opacity=".8" filter="url(#kd3)">
<text x="11" y="39.6" fill="#e8822a" textLength="32" lengthAdjust="spacingAndGlyphs">We Are More Than a Daycare</text>
<g fill="#6a5cc0">
<text x="11" y="44.8" textLength="31" lengthAdjust="spacingAndGlyphs">Fun, Nurturing, Safe, Loving</text>
<text x="11" y="47.6" textLength="41" lengthAdjust="spacingAndGlyphs">Environment with loving professional</text>
<text x="11" y="50.4" textLength="21" lengthAdjust="spacingAndGlyphs">and Nutritious Meals</text>
<text x="11" y="56" textLength="40" lengthAdjust="spacingAndGlyphs">Now! spots available for 2 years and</text>
<text x="11" y="58.8" textLength="3" lengthAdjust="spacingAndGlyphs">up</text>
</g>
<g fill="#b3cf48" text-anchor="end">
<text x="52" y="65" textLength="26" lengthAdjust="spacingAndGlyphs">Openning Apr 30, 2013</text>
<text x="52" y="67.8" textLength="21" lengthAdjust="spacingAndGlyphs">Located in Northfield</text>
<text x="52" y="70.6" textLength="24" lengthAdjust="spacingAndGlyphs">at 5 Kentbury Park Rd.</text>
</g>
<text x="11" y="75.4" fill="#8a8a8a" textLength="38" lengthAdjust="spacingAndGlyphs">Full time and part time availability</text>
</g>
<path class="trim" d="M-1 -1H92V130H-1Z M.25 0.5H90.45V128.4H.25Z" fill-rule="evenodd" fill="#1b1b1b"/>
</svg>
<svg style="position:absolute;left:561px;top:414px" width="91" height="129" viewBox="0 0 91 129">
<defs>
<pattern id="dgp" width="7" height="7" patternUnits="userSpaceOnUse"><rect width="7" height="7" fill="#d5e1ec"/><path d="M3.5 0 L7 3.5 L3.5 7 L0 3.5 Z" fill="#becfe0"/></pattern>
<linearGradient id="dgph" x1="0" y1="0" x2="0" y2="1"><stop offset="0" stop-color="#142a0c"/><stop offset=".1" stop-color="#23461a"/><stop offset=".19" stop-color="#2f6a1c"/><stop offset=".28" stop-color="#7fc436"/><stop offset="1" stop-color="#a8de56"/></linearGradient>
<filter id="dg6" x="-10%" y="-10%" width="120%" height="120%"><feGaussianBlur stdDeviation=".6"/></filter>
<filter id="dg3" x="-10%" y="-10%" width="120%" height="120%"><feGaussianBlur stdDeviation=".3"/></filter>
<clipPath id="dgc"><rect x="11" y="40.4" width="70.4" height="60"/></clipPath>
</defs>
<rect width="91" height="129" fill="#fff"/>
<rect x="4.4" y="4" width="83" height="121" fill="url(#dgp)" filter="url(#dg3)"/>
<rect x="4.4" y="13" width="83" height="8.2" fill="#5f88a9"/>
<text x="44.8" y="20.7" font-family="Liberation Serif,serif" font-weight="bold" font-size="12" fill="#fff" text-anchor="middle" textLength="72.6" lengthAdjust="spacingAndGlyphs" stroke="#fff" stroke-width=".3">LOST DOG</text>
<text x="9" y="32.8" font-family="Liberation Serif,serif" font-weight="bold" font-size="10" fill="#c93630" textLength="30.4" lengthAdjust="spacingAndGlyphs">$100.0</text>
<g font-family="Liberation Serif,serif" font-weight="bold" font-size="3.2" fill="#222" opacity=".75" filter="url(#dg3)">
<text x="10" y="38.2" textLength="20" lengthAdjust="spacingAndGlyphs">(425) 855-0975</text>
<text x="80" y="38.2" text-anchor="end" textLength="30" lengthAdjust="spacingAndGlyphs">finlay.a@gmail.com</text>
</g>
<g clip-path="url(#dgc)"><g filter="url(#dg6)">
<rect x="9" y="38" width="75" height="64" fill="url(#dgph)"/>
<path d="M36 60 C37 54 42 51.4 47 51.6 L57 51.2 C63 51 68 54 69 60 C71 64 74 69 74.4 78 L70 80 L30 80 L29.6 78 C30 69 33 64 36 60 Z" fill="#553222"/>
<path d="M36 58 C31 60 28.6 68 29.4 79 L36 79 C38 72 39 65 40 56 Z" fill="#7a4a34"/>
<path d="M69 58 C73 61 75 69 74.6 79 L68 79 C66 72 65 65 64 56 Z" fill="#7a4a34"/>
<path d="M43 54 C48 52.4 56 52.4 61 54 L63 68 L42 68 Z" fill="#472a1c"/>
<circle cx="48.6" cy="65" r="1.3" fill="#7a6a34"/><circle cx="58.6" cy="66.6" r="1.3" fill="#7a6a34"/>
<rect x="9" y="72" width="27" height="6" fill="#9cc2ea"/>
</g></g>
<path class="trim" d="M-1 -1H92V130H-1Z M.25 0.5H90.45V128.4H.25Z" fill-rule="evenodd" fill="#1b1b1b"/>
</svg>

<div class="lab" style="left:44px;top:374px;width:120px">Bake Sale Flyer</div>
<div class="lab" style="left:212px;top:374px;width:120px">Barbershop Flyer</div>
<div class="lab" style="left:379px;top:374px;width:120px">Church Flyer</div>
<div class="lab" style="left:547px;top:374px;width:120px">Golf Flyer</div>
</div>
<div id="sb"><i></i></div>
<div id="bot"><div style="position:absolute;left:0;bottom:0;width:3px;height:3px;background:radial-gradient(circle at 100% 0,rgba(0,0,0,0) 2.4px,#1f3a1c 3.2px)"></div>
<svg style="position:absolute;left:300px;top:7px" width="290" height="30" viewBox="0 0 290 30">
<defs><linearGradient id="kn" x1="0" y1="0" x2="0" y2="1"><stop offset="0" stop-color="#ffffff"/><stop offset="1" stop-color="#e2e2e2"/></linearGradient></defs>
<rect x="29" y="12.3" width="220" height="3.2" rx="1.6" fill="#9d9d9d" stroke="#777" stroke-width=".8"/>
<rect x="29" y="15.6" width="220" height="1" rx=".5" fill="#d0d0d0" opacity=".7"/>
<circle cx="29.7" cy="14" r="5.2" fill="url(#kn)" stroke="#6f6f6f" stroke-width="1"/>
<rect x="7.5" y="11.5" width="7.5" height="5.4" fill="#b9b9b9" stroke="#444" stroke-width="1"/>
<path d="M9.4 16.4 L9.8 14.6 L10.6 14.2 L10.6 13 L11.9 13 L11.9 14.2 L12.7 14.6 L13.1 16.4 Z" fill="#444"/>
<rect x="262.8" y="8.8" width="13.4" height="10.4" fill="#b5b5b5" stroke="#3c3c3c" stroke-width="1.6"/>
<path d="M265.4 18.4 L266 15.6 L268.2 14.6 L268.2 11.6 L270.8 11.6 L270.8 14.6 L273 15.6 L273.6 18.4 Z" fill="#3c3c3c"/>
</svg>
<div class="btn" style="left:18px;width:145px;top:11px;font-size:12.3px">Open Existing Project…</div>
<div class="btn" style="left:728px;width:64px">Cancel</div>
<div class="btn" style="left:799px;width:64px">Choose</div>
</div>
</div>
</body></html>
